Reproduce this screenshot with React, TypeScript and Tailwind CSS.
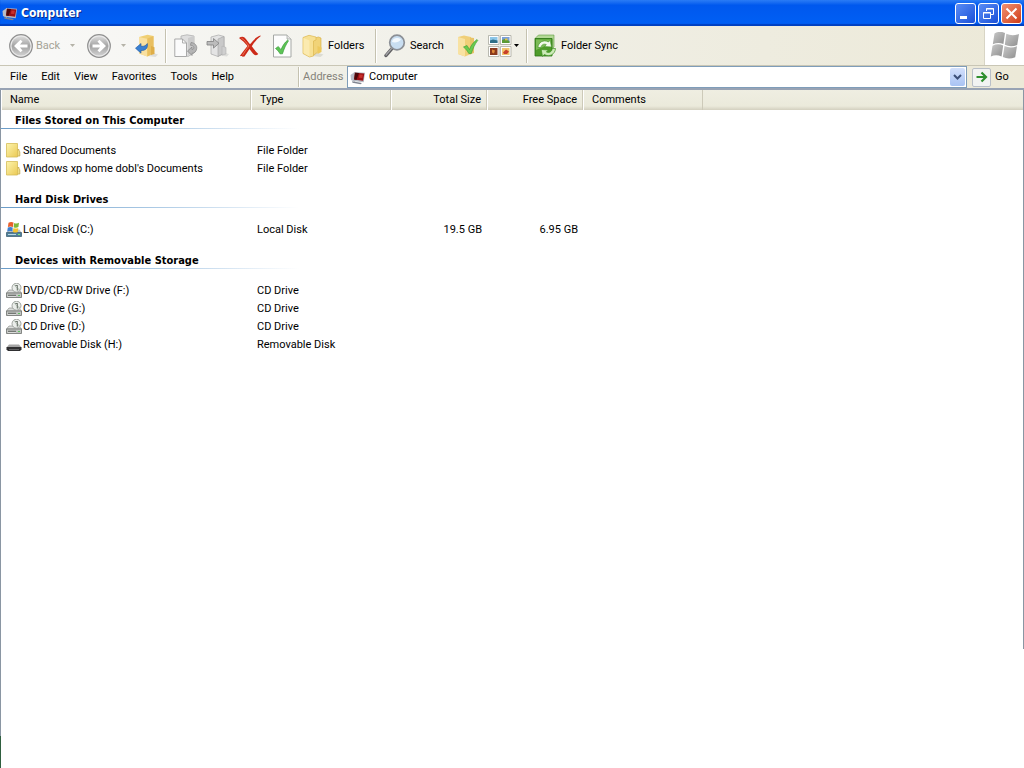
import React from 'react';

type IconProps = { className?: string };

const menus = ["File", "Edit", "View", "Favorites", "Tools", "Help"];

const groups = [
  {
    title: "Files Stored on This Computer",
    items: [
      { name: "Shared Documents", type: "File Folder", icon: FolderSmall },
      { name: "Windows xp home dobl's Documents", type: "File Folder", icon: FolderSmall },
    ],
  },
  {
    title: "Hard Disk Drives",
    items: [
      { name: "Local Disk (C:)", type: "Local Disk", total: "19.5 GB", free: "6.95 GB", icon: LocalDisk },
    ],
  },
  {
    title: "Devices with Removable Storage",
    items: [
      { name: "DVD/CD-RW Drive (F:)", type: "CD Drive", icon: CdDrive },
      { name: "CD Drive (G:)", type: "CD Drive", icon: CdDrive },
      { name: "CD Drive (D:)", type: "CD Drive", icon: CdDrive },
      { name: "Removable Disk (H:)", type: "Removable Disk", icon: RemovableDisk },
    ],
  },
] as {
  title: string;
  items: { name: string; type: string; total?: string; free?: string; icon: React.FC }[];
}[];

/* ---------- small icons ---------- */

function ComputerIcon({ className = "size-4" }: IconProps) {
  return (
    <svg viewBox="0 0 16 16" className={`shrink-0 ${className}`} aria-hidden="true">
      <path d="M.5 6L4 3.500 5 13l-4-2z" fill="#b9bdc8" />
      <path d="M4 3l11 .8-1.300 9.500L3 12z" fill="#b4b8c2" />
      <path d="M5 3.700l9.300.8-1.200 7.300-9-1.200z" fill="#9c1015" />
      <path d="M5 3.700l4 .4-2.500 6.900-2.400-.4z" fill="#4c0709" />
      <path d="M9.500 5.500l3.300.3-.5 3.300-3.400-.4z" fill="#c8302c" />
      <path d="M2 12.300l10 1.700-1.500 1.200-8-1.500z" fill="#7f8490" />
    </svg>
  );
}

function FolderSmall() {
  return (
    <svg viewBox="0 0 16 16" className="size-4 shrink-0" aria-hidden="true">
      <defs>
        <linearGradient id="folderSmall" x1="0" y1="0" x2="1" y2="1">
          <stop offset="0" stopColor="#fdf5ae" />
          <stop offset="1" stopColor="#ebc955" />
        </linearGradient>
      </defs>
      <path d="M10.500 6.500H13V8l.8.700v4.300H10.500z" fill="#f0dc86" stroke="#c4a84c" strokeWidth=".8" />
      <path d="M.5.500h11v13.500H.5z" fill="url(#folderSmall)" stroke="#d6bc58" strokeWidth=".8" />
    </svg>
  );
}

function LocalDisk() {
  return (
    <svg viewBox="0 0 16 16" className="size-4 shrink-0" aria-hidden="true">
      <path d="M3 7.500h10.500l2 3H.5z" fill="#b9c3ca" />
      <path d="M.5 10.500h15v4H.5z" fill="#4f7f98" stroke="#34566a" strokeWidth=".7" />
      <path d="M2 12.500h8" stroke="#bcd8e4" />
      <path d="M12 12.500h2" stroke="#7df07a" />
      <path d="M2.500.800c1.700-1 3.400-1 5-.2L6.900 5c-1.600-.7-3.300-.7-5 0z" fill="#e8602c" />
      <path d="M8.200.900c1.600.8 3.200.7 4.800-.1l-.6 4.300c-1.600.8-3.200.8-4.800.1z" fill="#7fb83a" />
      <path d="M1.800 5.600c1.700-.8 3.400-.7 5 0L6.200 9.500c-1.600-.7-3.300-.6-5 .1z" fill="#3d7fd0" />
      <path d="M7.500 5.900c1.600.7 3.200.7 4.800 0L11.700 10c-1.600.7-3.200.7-4.800 0z" fill="#f4c32c" />
    </svg>
  );
}

function CdDrive() {
  return (
    <svg viewBox="0 0 16 16" className="size-4 shrink-0" aria-hidden="true">
      <path d="M3 7h10l2.500 3H.5z" fill="#dcdedc" stroke="#8d908d" strokeWidth=".7" />
      <path d="M.5 10h15v4.500H.5z" fill="#c2c5c2" stroke="#6c706c" strokeWidth=".8" />
      <path d="M2 12.300h8" stroke="#4c504c" />
      <path d="M2 13.300h8" stroke="#f3f3f3" strokeWidth=".6" />
      <path d="M12 12.500h2" stroke="#5fbf5f" />
      <circle cx="10.500" cy="4.700" r="4.500" fill="#eaedea" stroke="#8b918b" strokeWidth=".8" />
      <path d="M10.500 4.700L8 1.300M10.500 4.700l3.500 2" stroke="#a8b8a8" strokeWidth=".8" />
      <path d="M9.300 2.500h2V7h1" fill="none" stroke="#6f776f" strokeWidth="1.100" />
    </svg>
  );
}

function RemovableDisk() {
  return (
    <svg viewBox="0 0 16 16" className="size-4 shrink-0" aria-hidden="true">
      <path d="M3 7.500h10l2.500 3H.5z" fill="#a5a5a5" />
      <path d="M.5 10h15v2.500l-1.500 1.500H2L.5 12.500z" fill="#2f2f31" />
      <path d="M3 12.500h10" stroke="#77777a" strokeWidth=".7" />
    </svg>
  );
}

/* ---------- toolbar icons ---------- */

function RoundArrow({ flip = false }: { flip?: boolean }) {
  return (
    <svg viewBox="0 0 24 24" className="size-6 shrink-0" aria-hidden="true">
      <defs>
        <linearGradient id="roundGrey" x1="0" y1="0" x2="0" y2="1">
          <stop offset="0" stopColor="#dadada" />
          <stop offset=".5" stopColor="#a3a3a3" />
          <stop offset="1" stopColor="#cfcfcf" />
        </linearGradient>
      </defs>
      <circle cx="12" cy="12" r="11.300" fill="#e9e9e9" stroke="#8f8f8f" strokeWidth="1.200" />
      <circle cx="12" cy="12" r="9.500" fill="url(#roundGrey)" />
      <path
        d={flip
          ? "M5.500 10.500h7.500L10.500 7.500l2-1.800L19 12l-6.500 6.300-2-1.800 2.500-3H5.500z"
          : "M18.500 10.500H11l2.500-3-2-1.800L5 12l6.500 6.300 2-1.800-2.500-3h7.500z"}
        fill="#fff"
      />
    </svg>
  );
}

function FolderUp() {
  return (
    <svg viewBox="0 0 24 24" className="size-6 shrink-0" aria-hidden="true">
      <path d="M15 18l8 2.500-2.500 2.500-8-1z" fill="#dededa" />
      <path d="M4 3L12.500.800 18.500 2v17l-6 3.500L4 19.500z" fill="#f0cf73" />
      <path d="M4 3l8 1.800v17.700L4 19.500z" fill="#f9e0a0" />
      <path d="M12.500 4.500L18.500 2v17l-6 3.500z" fill="#e9bf60" />
      <path d="M16 12l3.500 1.200V20L16 21z" fill="#dfae48" />
      <path d="M.5 14.200l5.500-4.700v2.800c3.200.3 5-.7 6.300-2.800.8 4.500-1.500 7.200-6.300 7v2.700z" fill="#3a80d2" stroke="#1c569f" strokeWidth=".6" />
    </svg>
  );
}

function MoveTo() {
  return (
    <svg viewBox="0 0 24 24" className="size-6 shrink-0" aria-hidden="true">
      <path d="M7 2l6-1.200L20 2v17l-6 3.500L7 20z" fill="#dedede" stroke="#b0b0b0" strokeWidth=".8" />
      <path d="M14 4l6-2v16l-6 3z" fill="#cccccc" />
      <path d="M.8 5H8.500l4 4v13.500H.8z" fill="#fbfbfb" stroke="#a0a0a0" strokeWidth=".9" />
      <path d="M8.500 5v4h4" fill="none" stroke="#a0a0a0" strokeWidth=".8" />
      <path d="M17 8.500c4 .5 6.200 3 5.700 6.200-.4 3-2.400 4.500-4.700 4.600v2.200L13.500 17l4.500-4v2.500c1.200-.1 1.900-.8 1.800-2-.1-1.300-1.300-2-3.300-2.200z" fill="#b5b5b5" stroke="#858585" strokeWidth=".7" />
    </svg>
  );
}

function CopyTo() {
  return (
    <svg viewBox="0 0 24 24" className="size-6 shrink-0" aria-hidden="true">
      <path d="M15 18l8 2-2 2.500-8-1z" fill="#dededb" />
      <path d="M5 3l7.500-2L18 2.500V19l-6 3.500L5 20z" fill="#e4e4e4" stroke="#b0b0b0" strokeWidth=".8" />
      <path d="M12 5l6-2.500V19l-6 3.500z" fill="#c9c9c9" stroke="#a5a5a5" strokeWidth=".6" />
      <path d="M16 12l4 1.500V20l-4 1z" fill="#cfcfcf" stroke="#b2b2b2" strokeWidth=".6" />
      <path d="M1 7.500h6.500V4.500l5.500 4.800-5.500 4.800V11H1z" fill="#bcbcbc" stroke="#808080" strokeWidth=".8" />
    </svg>
  );
}

function DeleteIcon() {
  return (
    <svg viewBox="0 0 24 24" className="size-6 shrink-0" aria-hidden="true">
      <path d="M1 4C3 2.500 5 2.500 6.500 3.500c2 2 3.500 4.500 5.500 6.800C15 6.500 18 3 22.300 1.500l.5.500C19 5 16 8.500 13.800 12.300c2 2.700 4 5.200 6.500 7.700-1.300 1.300-2.900 1.600-4 .8-1.900-1.500-3.300-3.600-4.800-5.700-1.800 2.900-3.500 5.400-5 7.400-1.500.3-3.500.1-4.500-.7 2.500-3.300 5-6.500 7.500-9.700C7 9 4.500 6.500 1 4z" fill="#cc2a18" />
      <path d="M3.500 4.200c3 1.500 5 4.800 7.500 7.800-2.500 3-4.500 6-6.500 9.300" fill="none" stroke="#ee7a5a" strokeWidth=".9" />
    </svg>
  );
}

function PropertiesIcon() {
  return (
    <svg viewBox="0 0 24 24" className="size-6 shrink-0" aria-hidden="true">
      <path d="M3.500 1h13.500L21 5v18H3.500z" fill="#fdfdfd" stroke="#a5a8a5" />
      <path d="M17 1v4h4" fill="#e6e6e6" stroke="#a5a8a5" strokeWidth=".8" />
      <path d="M5.500 14.500l2.800-2 2.700 3.200c1.500-4 3.700-7.200 6.700-9.700l.8.800c-2.500 3.700-4.500 8-6 13h-2.500C9 18 7.500 16 5.500 14.500z" fill="#5cc455" stroke="#2f9430" strokeWidth=".6" />
    </svg>
  );
}

function FoldersIcon() {
  return (
    <svg viewBox="0 0 22 24" className="h-6 w-[22px] shrink-0" aria-hidden="true">
      <path d="M13 18l8.500 2.500-3 2.500-8-1z" fill="#dcdcd4" />
      <path d="M8 5l8.500-2L19 4v11.500L12 21l-4-1z" fill="#f1d377" stroke="#d5ad42" strokeWidth=".6" />
      <path d="M1 3.500L7 1.300 14 3v3l-2.500 1v15L7.500 23 1 19.500z" fill="#f7e093" stroke="#dcb850" strokeWidth=".7" />
      <path d="M1.500 4l6 2.500v16L1.500 19z" fill="#fbeab0" />
      <path d="M15.500 12l4 1.500V18l-4 2z" fill="#edc95e" />
    </svg>
  );
}

function SearchIcon() {
  return (
    <svg viewBox="0 0 22 24" className="h-6 w-[22px] shrink-0" aria-hidden="true">
      <path d="M8 14.500l-6 7" stroke="#5f5f62" strokeWidth="3.400" strokeLinecap="round" />
      <path d="M7.500 14.500l-5.500 6.500" stroke="#a5a5a8" strokeWidth="1.200" strokeLinecap="round" />
      <circle cx="13" cy="8.500" r="7.300" fill="#c9def1" stroke="#8c9096" strokeWidth="1.700" />
      <path d="M8 8c.5-3.500 5-5.500 9-2.500-2 2.500-5.500 3.500-9 2.500z" fill="#f3f9fe" />
    </svg>
  );
}

function FolderCheck() {
  return (
    <svg viewBox="0 0 24 24" className="size-6 shrink-0" aria-hidden="true">
      <path d="M2 3l6-1.500L15 3v17l-6 2.500L2 20z" fill="#f0cf78" />
      <path d="M2 3l7 2v17.500L2 20z" fill="#f8e2a2" />
      <path d="M14 3.500l4 .5v15l-4 1.500z" fill="#e9c468" />
      <path d="M7.500 13l3.500-1.500 2.500 4c1.300-4 4-7.500 7.500-10l.8.800c-3 4-5 8.500-6.500 13.200h-2.500C11.300 17 10 15 7.500 13z" fill="#6acb4e" stroke="#359a32" strokeWidth=".6" />
    </svg>
  );
}

function ViewsIcon() {
  return (
    <svg viewBox="0 0 24 24" className="size-6 shrink-0" aria-hidden="true">
      <g fill="#fff" stroke="#a9a9a0" strokeWidth=".8">
        <path d="M.5 1.500h10.500v9H.5zM12.500 1.500H23v9H12.500zM.5 12.500h10.500v10H.5zM12.500 12.500H23v10H12.500z" />
      </g>
      <path d="M2 3h7.500v6H2z" fill="#8cc6e8" />
      <path d="M2 6.500l3-1 4.500 1V9H2z" fill="#2f6e86" />
      <path d="M14 3h7.500v6H14z" fill="#7a9fd8" />
      <path d="M14 6l3-1 4.500 2v2H14z" fill="#5a9a35" />
      <path d="M17 4.500h2.500v1.800H17z" fill="#e2c33c" />
      <path d="M2 14h7.500v7H2z" fill="#8b3a1c" />
      <path d="M4 15.500l3 1-1 3-2-1z" fill="#e08a3a" />
      <path d="M14 14h7.500v7H14z" fill="#f0c46c" />
      <path d="M15 18.500l3-3 3 2-2 2.500h-3z" fill="#c9402a" />
    </svg>
  );
}

function SyncIcon() {
  return (
    <svg viewBox="0 0 22 24" className="h-6 w-[22px] shrink-0" aria-hidden="true">
      <path d="M1 4.500L4.500 1H20v12l-2 2V4.500z" fill="#b4d996" stroke="#5f9c42" strokeWidth=".6" />
      <path d="M1 4.500h17V22H1z" fill="#4f9c2a" stroke="#2c7414" strokeWidth=".8" />
      <path d="M2 5.500h15v4L2 16z" fill="#7cbb57" />
      <path d="M4 13.500C4 8.500 9.500 5 14.500 8l1.700-1.800L17.500 13l-7-.4 1.800-2c-2.600-1.200-5.100.2-5.300 2.900z" fill="#f2faec" stroke="#3f8f22" strokeWidth=".6" />
      <path d="M21.500 14.500c-.3 5.800-6.200 9-11.200 6L8.500 22.500 7.200 15.500l7.100.5-1.900 2c2.600 1.300 5.500-.2 5.900-3.500z" fill="#cdeab8" stroke="#3f8f22" strokeWidth=".7" />
    </svg>
  );
}

function WindowsFlag() {
  return (
    <svg viewBox="0 0 30 28" className="h-7 w-[30px]" aria-hidden="true">
      <defs>
        <linearGradient id="flagGrey" x1="0" y1="0" x2="1" y2="1">
          <stop offset="0" stopColor="#c9c9c9" />
          <stop offset="1" stopColor="#8f8f8f" />
        </linearGradient>
      </defs>
      <g fill="url(#flagGrey)">
        <path d="M4.500 1.500C8-.7 11.500-.7 15 1l-1.600 11C10 10.500 6.500 10.500 2.800 12.300z" />
        <path d="M16.300 1.700c4 1.900 8 2 12.700.2l-1.800 11c-4.500 1.800-8.500 1.700-12.400-.2z" />
        <path d="M2.500 13.700c3.700-1.800 7.200-1.800 10.700-.2l-1.700 11C8 22.800 4.500 22.800.8 24.500z" />
        <path d="M14.500 14.100c4 1.900 8 2 12.500.2l-1.800 11c-4.500 1.800-8.500 1.700-12.400-.2z" />
      </g>
    </svg>
  );
}

function Caret({ className = "" }: IconProps) {
  return (
    <svg viewBox="0 0 5 3" className={`h-[3px] w-[5px] shrink-0 ${className}`} aria-hidden="true">
      <path d="M0 0h5L2.500 3z" fill="currentColor" />
    </svg>
  );
}

function Separator() {
  return <div className="h-[34px] w-0.5 shrink-0 border-l border-[#c5c2b0] bg-white" />;
}

/* ---------- window parts ---------- */

function TitleBar() {
  const button = "flex size-[21px] items-center justify-center rounded-[3px] border border-white";
  return (
    <header className="flex h-[26px] items-center bg-linear-to-b from-[#2a7cf5] via-[#0058ee] via-20% to-[#0060f5] pr-[2px] pl-[2px] shadow-[inset_0_-2px_1px_#0040c0]">
      <ComputerIcon />
      <h1 className="ml-[3px] flex-1 font-['DejaVu_Sans_Condensed','DejaVu_Sans',sans-serif] text-[12px] font-bold text-white [text-shadow:1px_1px_#0a2a8a]">
        Computer
      </h1>
      <div className="flex gap-0.5">
        <button aria-label="Minimize" className={`${button} bg-linear-to-br from-[#5a8cf5] to-[#1a4fd8]`}>
          <svg viewBox="0 0 19 19" className="size-[19px]"><path d="M4 12h7v3H4z" fill="#fff" /></svg>
        </button>
        <button aria-label="Restore" className={`${button} bg-linear-to-br from-[#5a8cf5] to-[#1a4fd8]`}>
          <svg viewBox="0 0 19 19" className="size-[19px]" fill="none" stroke="#fff">
            <path d="M7.500 7V4.500h7v6H12M7 5h8M4.500 8.500h7v6h-7zM4 9h8" />
          </svg>
        </button>
        <button aria-label="Close" className={`${button} bg-linear-to-br from-[#f09070] to-[#d03a10]`}>
          <svg viewBox="0 0 19 19" className="size-[19px]"><path d="M4.500 4.500l10 10M14.500 4.500l-10 10" stroke="#fff" strokeWidth="2" /></svg>
        </button>
      </div>
    </header>
  );
}

function Toolbar() {
  const iconButton = "flex h-9 w-8 shrink-0 items-center justify-center";
  return (
    <div className="flex h-10 items-center border-b border-[#c9c6b5] bg-linear-to-r from-[#f9f9f8] via-[#f0efe6] via-50% to-[#ece9d8]">
      <button disabled className="flex h-9 w-16 shrink-0 items-center gap-[3px] pl-[9px] text-[#a5a396]">
        <RoundArrow />
        Back
      </button>
      <button disabled aria-label="Back history" className="flex h-9 w-4 shrink-0 items-center justify-center text-[#b5b3a8]">
        <Caret />
      </button>
      <button disabled aria-label="Forward" className="flex h-9 w-[37px] shrink-0 items-center justify-center">
        <RoundArrow flip />
      </button>
      <button disabled aria-label="Forward history" className="flex h-9 w-3 shrink-0 items-center justify-center text-[#b5b3a8]">
        <Caret />
      </button>
      <button aria-label="Up" className="flex h-9 w-9 shrink-0 items-center justify-center">
        <FolderUp />
      </button>
      <Separator />
      <div className="flex pl-[3px]">
        <button disabled aria-label="Move To" className={iconButton}><MoveTo /></button>
        <button disabled aria-label="Copy To" className={iconButton}><CopyTo /></button>
        <button aria-label="Delete" className={iconButton}><DeleteIcon /></button>
        <button aria-label="Properties" className={iconButton}><PropertiesIcon /></button>
      </div>
      <button className="flex h-9 w-[77px] shrink-0 items-center gap-1 px-1">
        <FoldersIcon />
        Folders
      </button>
      <Separator />
      <button className="ml-[3px] flex h-9 w-[72px] shrink-0 items-center gap-1 px-1">
        <SearchIcon />
        Search
      </button>
      <button aria-label="Synchronize" className={iconButton}><FolderCheck /></button>
      <button aria-label="Views" className="mr-1 flex h-9 w-[38px] shrink-0 items-center gap-0.5 pl-1">
        <ViewsIcon />
        <Caret />
      </button>
      <Separator />
      <button className="ml-0.5 flex h-9 shrink-0 items-center gap-[5px] px-1 whitespace-nowrap">
        <SyncIcon />
        Folder Sync
      </button>
      <div className="ml-auto flex h-full w-10 items-center justify-center border-l border-[#d8d5c5] bg-white">
        <WindowsFlag />
      </div>
    </div>
  );
}

function MenuBar() {
  return (
    <div className="flex h-6 items-center border-b-2 border-[#98a3b4] bg-linear-to-r from-[#f6f6f3] via-[#efeee4] via-40% to-[#ece9d8]">
      <nav className="flex w-[298px] shrink-0 pl-[3px]">
        {menus.map((menu) => (
          <button key={menu} className="px-[7px]">{menu}</button>
        ))}
      </nav>
      <div className="h-5 w-0.5 border-l border-[#c5c2b0] bg-white" />
      <label htmlFor="address" className="w-[47px] shrink-0 pl-[3px] text-[#85837a]">Address</label>
      <div className="flex h-[22px] flex-1 items-center border border-[#7f9db9] bg-white pr-px pl-0.5">
        <ComputerIcon />
        <select id="address" className="h-5 flex-1 appearance-none bg-transparent pl-[3px] outline-none">
          <option>Computer</option>
        </select>
        <span className="pointer-events-none flex h-[18px] w-[15px] items-center justify-center rounded-[2px] bg-linear-to-b from-[#d3e0fc] to-[#a9c3f3]">
          <svg viewBox="0 0 9 6" className="h-1.5 w-[9px]" aria-hidden="true">
            <path d="M1 1l3.500 3.500L8 1" fill="none" stroke="#3c4f78" strokeWidth="2" />
          </svg>
        </span>
      </div>
      <button className="flex w-[57px] shrink-0 items-center gap-1 pl-[5px]">
        <span className="flex h-[19px] w-[19px] items-center justify-center rounded-[2px] border border-[#b9bfc8] bg-[#f2f3f2]">
          <svg viewBox="0 0 12 12" className="size-3" aria-hidden="true">
            <path d="M.5 6h9M5.500 1.500L10 6l-4.500 4.500" fill="none" stroke="#2f8f2f" strokeWidth="2.200" />
          </svg>
        </span>
        Go
      </button>
    </div>
  );
}

function FileTable() {
  const head = "border-r border-r-[#cdcab9] font-normal shadow-[inset_1px_0_#fff]";
  return (
    <table className="w-full table-fixed border-separate border-spacing-0">
      <colgroup>
        <col className="w-[250px]" />
        <col className="w-[140px]" />
        <col className="w-24" />
        <col className="w-24" />
        <col className="w-[120px]" />
        <col />
      </colgroup>
      <thead>
        <tr className="h-5 bg-linear-to-b from-[#efeee2] via-[#ebeadb] via-80% to-[#d3d0bf]">
          <th className={`${head} pl-[9px] text-left`}>Name</th>
          <th className={`${head} pl-[9px] text-left`}>Type</th>
          <th className={`${head} pr-[5px] text-right`}>Total Size</th>
          <th className={`${head} pr-[5px] text-right`}>Free Space</th>
          <th className={`${head} pl-[9px] text-left`}>Comments</th>
          <td />
        </tr>
      </thead>
      {groups.map((group, index) => (
        <tbody key={group.title}>
          <tr>
            <th colSpan={6} className={`pb-3 text-left ${index > 0 ? "pt-[11px]" : ""}`}>
              <div className="h-[18px] pl-[14px] font-['DejaVu_Sans_Condensed','DejaVu_Sans',sans-serif] leading-[22px] whitespace-nowrap">
                {group.title}
              </div>
              <div className="mb-px h-px w-[298px] bg-linear-to-r from-[#6a9cc8] via-[#a9c8e4] via-50% to-white" />
            </th>
          </tr>
          {group.items.map(({ icon: Icon, ...item }) => (
            <tr key={item.name} className="h-[18px]">
              <td className="pl-[5px]">
                <div className="flex items-center gap-px whitespace-nowrap">
                  <Icon />
                  {item.name}
                </div>
              </td>
              <td className="pl-1.5">{item.type}</td>
              <td className="pr-[5px] text-right">{item.total}</td>
              <td className="pr-[5px] text-right">{item.free}</td>
              <td />
              <td />
            </tr>
          ))}
        </tbody>
      ))}
    </table>
  );
}

export default function App() {
  return (
    <div className="flex min-h-screen flex-col bg-white font-[Roboto,'Liberation_Sans',sans-serif] text-[11px] leading-[16px] text-black">
      <TitleBar />
      <Toolbar />
      <MenuBar />
      <div className="flex flex-1">
        <div className="flex w-px shrink-0 flex-col">
          <div className="flex-1 bg-[#8a96a3]" />
          <div className="h-8 bg-[#2f5f3f]" />
        </div>
        <main className="min-w-0 flex-1">
          <FileTable />
        </main>
        <div className="h-[559px] w-px shrink-0 bg-[#8a96a3]" />
      </div>
    </div>
  );
}
